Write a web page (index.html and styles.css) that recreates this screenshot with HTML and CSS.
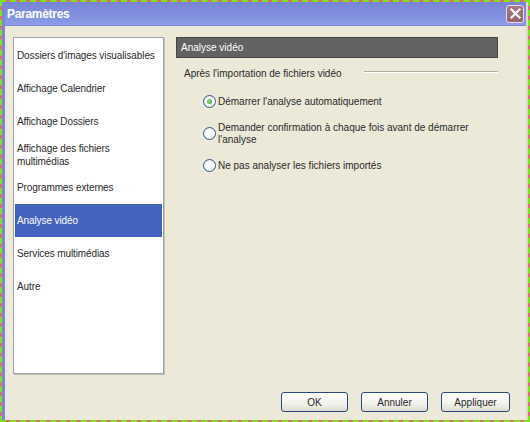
FILE: index.html
```html
<!DOCTYPE html>
<html lang="fr">
<head>
<meta charset="utf-8">
<title>Paramètres</title>
<link rel="stylesheet" href="styles.css">
</head>
<body>
<div class="screen">
  <div class="window">
    <div class="titlebar">
      <span class="title">Paramètres</span>
      <span class="close"><svg width="11" height="11" viewBox="0 0 11 11"><path d="M1.5 1.5 L9.5 9.5 M9.5 1.5 L1.5 9.5" stroke="#fff" stroke-width="2.2" stroke-linecap="square"/></svg></span>
    </div>
    <div class="body">
      <div class="main">
        <ul class="list">
          <li class="item">Dossiers d'images visualisables</li>
          <li class="item">Affichage Calendrier</li>
          <li class="item">Affichage Dossiers</li>
          <li class="item">Affichage des fichiers<br>multimédias</li>
          <li class="item">Programmes externes</li>
          <li class="item selected">Analyse vidéo</li>
          <li class="item">Services multimédias</li>
          <li class="item">Autre</li>
        </ul>
        <div class="panel">
          <div class="panel-head">Analyse vidéo</div>
          <div class="group">
            <span class="group-label">Après l'importation de fichiers vidéo</span>
            <span class="group-line"></span>
          </div>
          <div class="options">
            <label class="option"><span class="radio checked"></span><span class="opt-text">Démarrer l'analyse automatiquement</span></label>
            <label class="option"><span class="radio"></span><span class="opt-text">Demander confirmation à chaque fois avant de démarrer l'analyse</span></label>
            <label class="option"><span class="radio"></span><span class="opt-text">Ne pas analyser les fichiers importés</span></label>
          </div>
        </div>
      </div>
      <div class="buttons">
        <button class="btn btn-ok">OK</button>
        <button class="btn btn-cancel">Annuler</button>
        <button class="btn btn-apply">Appliquer</button>
      </div>
    </div>
  </div>
</div>
</body>
</html>
```
FILE: styles.css
```css
* { box-sizing: border-box; }
html, body { margin: 0; padding: 0; }
body {
  width: 530px;
  height: 422px;
  overflow: hidden;
  font-family: "Liberation Sans", Arial, sans-serif;
  font-size: 10px;
  color: #2a2a2a;
}
.screen {
  width: 530px;
  height: 422px;
  border: 2px dashed #7de31c;
  background: #d87070;
}
.window {
  width: 100%;
  height: 100%;
  display: flex;
  flex-direction: column;
  background: #ece9d8;
  border-left: 3px solid #7a86d8;
  border-right: 2px solid #dcd9cc;
}
.titlebar {
  height: 24px;
  flex: none;
  display: flex;
  align-items: center;
  justify-content: space-between;
  padding: 0 2px 0 2px;
  background: linear-gradient(#7884d6, #8594e2 70%, #8c9ce6);
  border-bottom: 1px solid #7787dc;
}
.title {
  color: #fff;
  font-weight: bold;
  font-size: 12px;
  letter-spacing: -0.3px;
}
.close {
  width: 18px;
  height: 18px;
  border: 1px solid #e8d8e0;
  border-radius: 3px;
  background: linear-gradient(#a87884, #9a6470);
  display: flex;
  align-items: center;
  justify-content: center;
}
.body {
  flex: 1;
  padding: 11px 16px 0 8px;
  display: flex;
  flex-direction: column;
}
.main {
  display: flex;
  gap: 12px;
}
.list {
  list-style: none;
  margin: 0;
  padding: 1px;
  width: 151px;
  height: 337px;
  background: #fff;
  border: 1px solid #9aa4ae;
  box-shadow: 1px 1px 0 #c4c1b4;
}
.item {
  height: 33px;
  padding: 0 2px;
  display: flex;
  align-items: center;
  line-height: 13px;
  letter-spacing: -0.1px;
}
.item.selected {
  background: #4463bf;
  color: #fff;
}
.panel {
  width: 322px;
}
.panel-head {
  height: 21px;
  background: #626262;
  border: 1px solid #454545;
  color: #fff;
  padding-left: 4px;
  display: flex;
  align-items: center;
}
.group {
  display: flex;
  align-items: center;
  margin-top: 8px;
  padding-left: 8px;
  height: 14px;
}
.group-label {
  white-space: nowrap;
}
.group-line {
  margin-left: 22px;
  width: 135px;
  height: 2px;
  border-top: 1px solid #b0aea2;
  border-bottom: 1px solid #fff;
  margin-top: -3px;
}
.options {
  display: flex;
  flex-direction: column;
  padding-left: 27px;
  margin-top: 15px;
  gap: 13.5px;
}
.option {
  display: flex;
  align-items: center;
  gap: 2px;
  line-height: 12px;
  min-height: 13px;
}
.opt-text {
  width: 262px;
}
.radio {
  flex: none;
  width: 13px;
  height: 13px;
  border-radius: 50%;
  border: 1px solid #2b5a8a;
  background: radial-gradient(circle at 60% 60%, #ffffff 40%, #dcdcd4 100%);
  display: flex;
  align-items: center;
  justify-content: center;
}
.radio.checked::after {
  content: "";
  width: 5px;
  height: 5px;
  border-radius: 50%;
  background: radial-gradient(circle at 40% 40%, #8ee07e, #239a23);
}
.buttons {
  display: flex;
  justify-content: flex-end;
  gap: 13px;
  margin-top: 18px;
}
.btn {
  height: 20px;
  width: 67px;
  border: 1px solid #2a4a7a;
  border-radius: 3px;
  background: linear-gradient(#ffffff, #f2f2ec 60%, #dedcd0);
  font-family: "Liberation Sans", Arial, sans-serif;
  font-size: 10px;
  color: #2a2a2a;
  padding: 0;
}
.btn-apply { width: 69px; }
```
